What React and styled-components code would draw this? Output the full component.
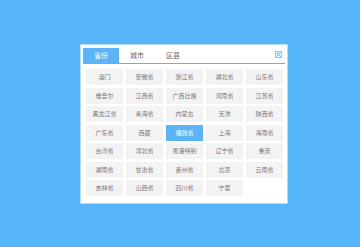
import React from "react";
import styled, { createGlobalStyle } from "styled-components";

const Global = createGlobalStyle`
  html, body { margin: 0; padding: 0; }
  body {
    background: #56b4f8;
    width: 360px;
    height: 247px;
    overflow: hidden;
    font-family: "Noto Sans CJK SC", "Noto Sans", sans-serif;
  }
`;

const Page = styled.div`
  padding: 44px 0 0 80px;
`;

const Panel = styled.div`
  width: 206px;
  box-sizing: content-box;
  background: #fff;
  border: 1px solid #b6dbf8;
  padding: 3px 2px 7px 2px;
  width: 202px;
`;

const TabBar = styled.div`
  display: flex;
  align-items: stretch;
  height: 15px;
  border-bottom: 1px solid #5ab4f5;
  position: relative;
`;

const Tab = styled.div`
  width: 36px;
  display: flex;
  align-items: center;
  justify-content: center;
  font-size: 7px;
  line-height: 1;
  color: ${(p) => (p.$active ? "#fff" : "#666")};
  background: ${(p) => (p.$active ? "#5ab4f5" : "transparent")};
`;

const Close = styled.div`
  position: absolute;
  right: 3px;
  top: 3px;
  width: 7px;
  height: 7px;
  box-sizing: border-box;
  border: 1px solid #8fcaf6;
  background: #eaf5fe;
  display: flex;
  align-items: center;
  justify-content: center;
`;

const Grid = styled.div`
  display: grid;
  grid-template-columns: repeat(5, 37px);
  grid-auto-rows: 16px;
  column-gap: 3px;
  row-gap: 2.5px;
  margin: 5px 2px 0 3px;
`;

const Cell = styled.div`
  display: flex;
  align-items: center;
  justify-content: center;
  font-size: 6px;
  line-height: 1;
  white-space: nowrap;
  color: ${(p) => (p.$active ? "#fff" : "#777")};
  background: ${(p) => (p.$active ? "#5ab4f5" : "#f3f3f3")};
`;

const items = [
  "澳门", "安徽省", "浙江省", "湖北省", "山东省",
  "维吾尔", "江西省", "广西壮族", "河南省", "江苏省",
  "黑龙江省", "青海省", "内蒙古", "天津", "陕西省",
  "广东省", "西藏", "福建省", "上海", "海南省",
  "台湾省", "河北省", "香港特别", "辽宁省", "重庆",
  "湖南省", "甘肃省", "贵州省", "北京", "云南省",
  "吉林省", "山西省", "四川省", "宁夏",
];

export default function App() {
  return (
    <>
      <Global />
      <Page>
        <Panel>
          <TabBar>
            <Tab $active>省份</Tab>
            <Tab>城市</Tab>
            <Tab>区县</Tab>
            <Close>
              <svg width="5" height="5" viewBox="0 0 5 5">
                <path d="M0.5 0.5L4.5 4.5M4.5 0.5L0.5 4.5" stroke="#5ab4f5" strokeWidth="1" />
              </svg>
            </Close>
          </TabBar>
          <Grid>
            {items.map((t) => (
              <Cell key={t} $active={t === "福建省"}>{t}</Cell>
            ))}
          </Grid>
        </Panel>
      </Page>
    </>
  );
}
